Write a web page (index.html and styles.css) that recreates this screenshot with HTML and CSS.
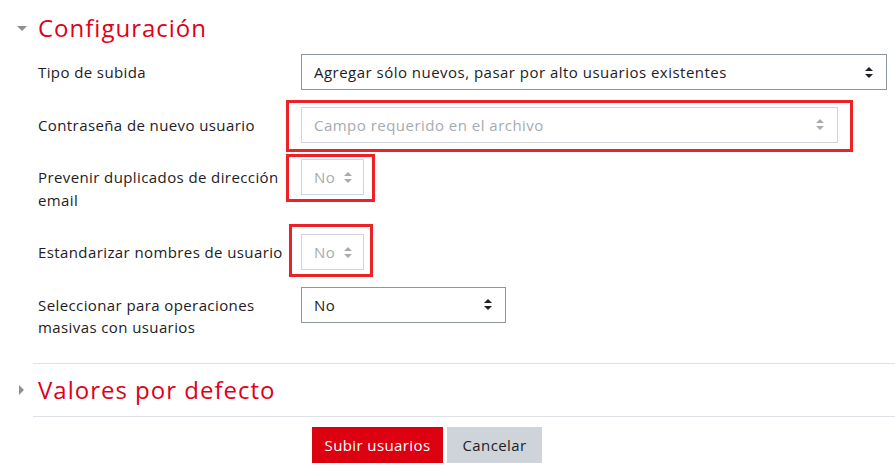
FILE: index.html
```html
<!DOCTYPE html>
<html lang="es">
<head>
<meta charset="utf-8">
<title>Subir usuarios</title>
<link rel="stylesheet" href="styles.css">
</head>
<body>
<form class="mform">
  <fieldset class="section">
    <div class="legend">
      <span class="tri tri-down"></span>
      <h3 class="legend-title">Configuración</h3>
    </div>
    <div class="rows">
      <div class="row">
        <label class="lbl">Tipo de subida</label>
        <div class="ctrl">
          <div class="select wide">
            <span>Agregar sólo nuevos, pasar por alto usuarios existentes</span>
            <span class="caret"></span>
          </div>
        </div>
      </div>
      <div class="row">
        <label class="lbl">Contraseña de nuevo usuario</label>
        <div class="ctrl">
          <div class="select disabled mid">
            <span>Campo requerido en el archivo</span>
            <span class="caret"></span>
          </div>
          <span class="mark mark1"></span>
        </div>
      </div>
      <div class="row">
        <label class="lbl">Prevenir duplicados de dirección email</label>
        <div class="ctrl">
          <div class="select disabled small">
            <span>No</span>
            <span class="caret"></span>
          </div>
          <span class="mark mark2"></span>
        </div>
      </div>
      <div class="row">
        <label class="lbl">Estandarizar nombres de usuario</label>
        <div class="ctrl">
          <div class="select disabled small">
            <span>No</span>
            <span class="caret"></span>
          </div>
          <span class="mark mark3"></span>
        </div>
      </div>
      <div class="row">
        <label class="lbl">Seleccionar para operaciones masivas con usuarios</label>
        <div class="ctrl">
          <div class="select medium">
            <span>No</span>
            <span class="caret"></span>
          </div>
        </div>
      </div>
    </div>
  </fieldset>
  <fieldset class="section collapsed">
    <div class="legend">
      <span class="tri tri-right"></span>
      <h3 class="legend-title">Valores por defecto</h3>
    </div>
  </fieldset>
  <div class="buttons">
    <button type="button" class="btn btn-primary">Subir usuarios</button>
    <button type="button" class="btn btn-secondary">Cancelar</button>
  </div>
</form>
</body>
</html>
```
FILE: styles.css
```css
* { box-sizing: border-box; }
html, body { margin: 0; padding: 0; background: #fff; }
body {
  font-family: "Open Sans", "Liberation Sans", sans-serif;
  font-size: 15px;
  color: #1d2125;
  width: 895px;
  overflow: hidden;
}
.mform { padding-left: 33px; }
.section { border: 0; margin: 0; padding: 0; }
.legend {
  display: flex;
  align-items: center;
  height: 28px;
  margin-top: 14px;
  position: relative;
}
.legend-title {
  margin: 0 0 0 5px;
  font-weight: 400;
  font-size: 24px;
  line-height: 28px;
  color: #e0001a;
  letter-spacing: 1px;
}
.tri { position: absolute; }
.tri-down {
  left: -16px;
  top: 12px;
  width: 0; height: 0;
  border-left: 5px solid transparent;
  border-right: 5px solid transparent;
  border-top: 5px solid #8f8f8f;
}
.tri-right {
  left: -14px;
  top: 9px;
  width: 0; height: 0;
  border-top: 5px solid transparent;
  border-bottom: 5px solid transparent;
  border-left: 5px solid #8f8f8f;
}
.rows { margin-top: 12px; padding-bottom: 1px; border-bottom: 1px solid #dee2e6; }
.row {
  display: flex;
  align-items: flex-start;
  margin-bottom: 16px;
}
.lbl {
  width: 268px;
  padding: 7px 16px 7px 5px;
  line-height: 22.5px;
  letter-spacing: 0.4px;
}
.ctrl { position: relative; flex: 1; }
.select {
  display: flex;
  align-items: center;
  justify-content: space-between;
  height: 36px;
  padding: 0 13px 0 12px;
  border: 1px solid #8f959e;
  color: #1d2125;
  background: #fff;
  letter-spacing: 0.48px;
  white-space: nowrap;
}
.select.wide { width: 586px; }
.select.mid { width: 537px; }
.select.small { width: 63px; padding-right: 11px; }
.select.medium { width: 205px; }
.select.disabled { border-color: #d2d5d9; color: #a7abb0; }
.caret {
  position: relative;
  width: 8px;
  height: 11px;
  flex: none;
}
.caret::before, .caret::after {
  content: "";
  position: absolute;
  left: 0;
  border-left: 4px solid transparent;
  border-right: 4px solid transparent;
}
.caret::before { top: 0; border-bottom: 4.5px solid #1d2125; }
.caret::after { bottom: 0; border-top: 4.5px solid #1d2125; }
.disabled .caret::before { border-bottom-color: #a7abb0; }
.disabled .caret::after { border-top-color: #a7abb0; }
.mark {
  position: absolute;
  border: 3px solid #ec2228;
  pointer-events: none;
}
.mark1 { left: -15px; top: -7px; width: 567px; height: 52px; }
.mark2 { left: -15px; top: -5px; width: 89px; height: 48px; }
.mark3 { left: -12px; top: -10px; width: 84px; height: 53px; }
.collapsed { border-bottom: 1px solid #dee2e6; padding-bottom: 12px; }
.collapsed .legend { margin-top: 12px; }
.buttons {
  display: flex;
  gap: 4px;
  padding-left: 279px;
  margin-top: 10px;
}
.btn {
  height: 36px;
  border: 0;
  border-radius: 0;
  font-family: inherit;
  font-size: 15px;
  padding: 0;
  letter-spacing: 0.4px;
  white-space: nowrap;
  text-align: center;
}
.btn-primary { background: #dc0011; color: #fff; width: 131px; }
.btn-secondary { background: #ced4da; color: #1d2125; width: 95px; }
```
